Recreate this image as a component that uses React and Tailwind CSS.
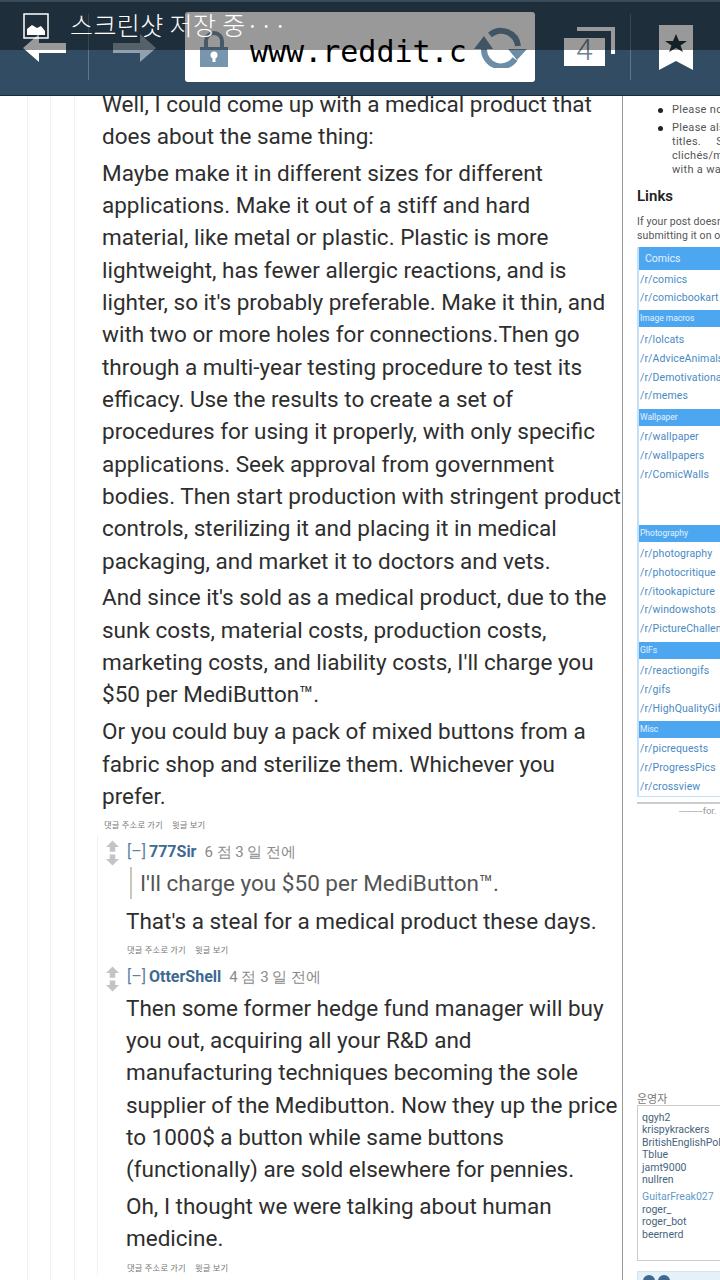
const linkGroups = [
  { title: 'Image macros', body: 'h-[82px] pt-[4.6px]', links: ['/r/lolcats', '/r/AdviceAnimals', '/r/Demotivational', '/r/memes'] },
  { title: 'Wallpaper', body: 'h-[99px] pt-[2.6px]', links: ['/r/wallpaper', '/r/wallpapers', '/r/ComicWalls'] },
  { title: 'Photography', body: 'h-[100px] pt-[3.6px]', links: ['/r/photography', '/r/photocritique', '/r/itookapicture', '/r/windowshots', '/r/PictureChallenge'] },
  { title: 'GIFs', body: 'h-[62px] pt-[3.6px]', links: ['/r/reactiongifs', '/r/gifs', '/r/HighQualityGifs'] },
  { title: 'Misc', body: 'h-[58px] pt-[2.6px]', links: ['/r/picrequests', '/r/ProgressPics', '/r/crossview'] },
]

function Votes() {
  return (
    <svg width="13" height="27" viewBox="0 0 14 28" className="mt-[1px] shrink-0">
      <path d="M7 0 L14 7 H10 V12 H4 V7 H0 Z" fill="#c4c4c4" />
      <path d="M4 15 H10 V20 H14 L7 27 L0 20 H4 Z" fill="#c4c4c4" />
    </svg>
  )
}

function CommentLinks() {
  return (
    <div className="h-[16px] pl-[1px] text-[8.3px] leading-[16px] text-[#777] whitespace-nowrap flex gap-[9px] tracking-[0.2px] font-['Noto_Sans_CJK_KR',sans-serif]">
      <span>댓글 주소로 가기</span>
      <span>윗글 보기</span>
    </div>
  )
}

function Byline({ name, meta }) {
  return (
    <div className="flex items-center h-[26px] pl-[1px] text-[16px] whitespace-nowrap">
      <span className="text-[#5f7f9c] mr-[3px]">[–]</span>
      <span className="font-bold text-[#3e6a92]">{name}</span>
      <span className="text-[#8a8a8a] text-[15px] ml-[8px]">{meta}</span>
    </div>
  )
}

function Header() {
  return (
    <div className="relative z-10 h-[96px] bg-[#324d63] border-b border-[#1c2c39] flex items-center">
      <svg width="44" height="28" viewBox="0 0 44 28" className="ml-[23px] mt-[1px]">
        <path d="M0 14 L16 0 V9 H43 V19 H16 V28 Z" fill="#fff" />
      </svg>
      <div className="ml-[21px] w-px h-[66px] mt-[-1px] bg-[#5d7789]" />
      <svg width="44" height="28" viewBox="0 0 44 28" className="ml-[24px] mt-[1px]">
        <path d="M43 14 L27 0 V9 H0 V19 H27 V28 Z" fill="#8fa1ae" />
      </svg>
      <div className="ml-[28px] w-[350px] h-[70px] bg-white rounded-[3px] flex items-center mt-[-1px]">
        <svg width="28" height="36" viewBox="0 0 28 36" className="ml-[15px] mt-[3px] shrink-0">
          <path d="M6 16 V10 a8 8 0 0 1 16 0 V16" fill="none" stroke="#7795ad" strokeWidth="4" />
          <path d="M0 16 H28 V36 H0 Z" fill="#7795ad" />
          <circle cx="14" cy="24" r="3.5" fill="#fff" />
          <path d="M12.5 25 H15.5 V31 H12.5 Z" fill="#fff" />
        </svg>
        <div className="ml-[22px] w-[216px] mt-[9px] whitespace-nowrap text-[30px] leading-none text-black font-['DejaVu_Sans_Mono',monospace]">www.reddit.c</div>
        <svg width="54" height="42" viewBox="0 0 54 42" className="ml-[8px] shrink-0">
          <path d="M16 9 A17 17 0 0 1 44 20" fill="none" stroke="#6d8ca5" strokeWidth="6" />
          <path d="M10 23 A17 17 0 0 0 41 33" fill="none" stroke="#6d8ca5" strokeWidth="6" />
          <path d="M0 23 H19 L10 10 Z" fill="#6d8ca5" />
          <path d="M34 23 H53 L43 34 Z" fill="#6d8ca5" />
        </svg>
      </div>
      <div className="relative ml-[29px] mt-[-2px] w-[52px] h-[40px]">
        <svg width="52" height="40" viewBox="0 0 52 40">
          <path d="M13 0 H51 V27 H47 V4 H13 Z" fill="#fff" />
          <path d="M0 11 H41 V39 H0 Z" fill="#fff" />
        </svg>
        <span className="absolute left-[12px] top-[8px] text-[30px] leading-[30px] font-light text-[#6e8192]">4</span>
      </div>
      <div className="ml-[14px] w-px h-[66px] mt-[-1px] bg-[#5d7789]" />
      <svg width="34" height="46" viewBox="0 0 34 46" className="ml-[28px]">
        <path d="M0 0 H34 V45 L17 36 L0 45 Z" fill="#fff" />
        <path d="M17 9 L20 16 H28 L21.5 20.5 L24 27 L17 23 L10 27 L12.5 20.5 L6 16 H14 Z" fill="#223644" />
      </svg>
    </div>
  )
}

// the screenshot toast drawn over the top of the browser bar
function StatusOverlay() {
  return (
    <div className="absolute z-20 top-0 left-0 w-full h-[50px] bg-[#000]/40 border-t-2 border-[#3a4c5a] text-white">
      <div className="flex items-center h-[48px] pl-[23px] pt-[4px]">
        <svg width="26" height="26" viewBox="0 0 26 26" className="mb-[4px]">
          <path d="M1 1 H25 V25 H1 Z" fill="none" stroke="#fff" strokeWidth="1.5" />
          <path d="M4 22 V16 L9 12 L14 15 L18 13 L22 18 V22 Z" fill="#fff" />
        </svg>
        <span className="ml-[21px] text-[25px] leading-none tracking-[0.4px] whitespace-nowrap font-['Noto_Sans_CJK_KR',sans-serif] font-light mb-[8px]">스크린샷 저장 중···</span>
      </div>
    </div>
  )
}

function Sidebar() {
  return (
    <div className="w-[97px] ml-[14px] overflow-hidden shrink-0 whitespace-nowrap text-[#444]">
      <div className="w-[140px]">
        <div className="pt-[15px] text-[11px] leading-[14px] tracking-[0.3px] text-[#555]">
          <div className="flex h-[18px]">
            <span className="w-[35px] pl-[21px] pt-[5px] shrink-0"><span className="block w-[5px] h-[5px] rounded-full bg-[#222]" /></span>
            <span>Please not</span>
          </div>
          <div className="flex">
            <span className="w-[35px] pl-[21px] pt-[5px] shrink-0"><span className="block w-[5px] h-[5px] rounded-full bg-[#222]" /></span>
            <div>
              <div>Please also</div>
              <div>titles. &nbsp; &nbsp; So</div>
              <div>clichés/memes</div>
              <div>with a warning</div>
            </div>
          </div>
        </div>
        <div className="mt-[7px] text-[15px] leading-[24px] font-semibold text-[#222]">Links</div>
        <div className="mt-[7px] text-[10.5px] leading-[14px] text-[#555] tracking-[0.1px]">
          If your post doesn't<br />submitting it on one
        </div>
        <div className="mt-[4px] border-l-2 border-b border-[#c5dff5]">
          <div className="h-[23px] bg-[#4da6f0] text-white/85 text-[10.5px] leading-[23px] pl-[6px]">Comics</div>
          <div className="h-[40px] text-[10.5px] leading-[18.8px] text-[#4a8ac4] pl-[1px] pt-[1px] tracking-[0.1px]">
            <div>/r/comics</div>
            <div>/r/comicbookart</div>
          </div>
          {linkGroups.map(g => (
            <div key={g.title}>
              <div className="h-[17px] bg-[#4da6f0] text-white/85 text-[8.5px] leading-[17px] pl-[1px]">{g.title}</div>
              <div className={`${g.body} text-[10.5px] leading-[18.8px] text-[#4a8ac4] pl-[1px] tracking-[0.1px]`}>
                {g.links.map(l => <div key={l}>{l}</div>)}
              </div>
            </div>
          ))}
        </div>
        <div className="mt-[5px] h-[2px] bg-[#ccc]" />
        <div className="text-[9.5px] leading-[13px] text-[#999] pl-[42px]">---------for.</div>
        <div className="mt-[274px] text-[11px] leading-[14px] text-[#777] font-['Noto_Sans_CJK_KR',sans-serif]">운영자</div>
        <div className="h-[156px] border border-[#ccc] bg-white pl-[4px] pt-[6px] text-[10.5px] leading-[12.6px] text-[#46647c]">
          <div>qgyh2</div>
          <div>krispykrackers</div>
          <div>BritishEnglishPolice</div>
          <div>Tblue</div>
          <div>jamt9000</div>
          <div>nullren</div>
          <div className="text-[#5f9bc9] mt-[4px]">GuitarFreak027</div>
          <div>roger_</div>
          <div>roger_bot</div>
          <div>beernerd</div>
        </div>
        <div className="mt-[10px] h-[12px] bg-[#e6f0f8] border border-[#d3e3ef] flex gap-[3px] pl-[5px] pt-[3px] overflow-hidden">
          <span className="w-[12px] h-[12px] rounded-full bg-[#3e6a92] shrink-0" />
          <span className="w-[12px] h-[12px] rounded-full bg-[#3e6a92] shrink-0" />
        </div>
      </div>
    </div>
  )
}

export default function App() {
  return (
    <div className="relative w-[720px] h-[1280px] overflow-hidden bg-white font-['Roboto',sans-serif]">
      <Header />
      <StatusOverlay />
      <div className="flex mt-[-8.5px] h-[1192.5px]">
        <div className="w-[623px] shrink-0 border-r border-[#999] pl-[27px] overflow-hidden">
          <div className="border-l border-[#f1f1f1] pl-[22px] h-full">
            <div className="border-l border-[#f1f1f1] pl-[23px] h-full">
              <div className="border-l border-[#f1f1f1] pl-[27px] h-full text-[22.5px] leading-[32.33px] text-[#2e2e2e] whitespace-nowrap">
                <p>Well, I could come up with a medical product that<br />does about the same thing:</p>
                <p className="mt-[4.5px]">
                  Maybe make it in different sizes for different<br />
                  applications. Make it out of a stiff and hard<br />
                  material, like metal or plastic. Plastic is more<br />
                  lightweight, has fewer allergic reactions, and is<br />
                  lighter, so it's probably preferable. Make it thin, and<br />
                  with two or more holes for connections.Then go<br />
                  through a multi-year testing procedure to test its<br />
                  efficacy. Use the results to create a set of<br />
                  procedures for using it properly, with only specific<br />
                  applications. Seek approval from government<br />
                  bodies. Then start production with stringent product<br />
                  controls, sterilizing it and placing it in medical<br />
                  packaging, and market it to doctors and vets.
                </p>
                <p className="mt-[4.5px]">
                  And since it's sold as a medical product, due to the<br />
                  sunk costs, material costs, production costs,<br />
                  marketing costs, and liability costs, I'll charge you<br />
                  $50 per MediButton™.
                </p>
                <p className="mt-[4.5px]">
                  Or you could buy a pack of mixed buttons from a<br />
                  fabric shop and sterilize them. Whichever you<br />
                  prefer.
                </p>
                <div className="mt-[3.5px] pl-[1px]"><CommentLinks /></div>

                <div className="mt-[4.5px] ml-[-5px] border-l border-[#f1f1f1] pl-[8px]">
                  <div className="flex gap-[7px] pt-[3px]">
                    <Votes />
                    <div className="min-w-0">
                      <Byline name="777Sir" meta="6 점 3 일 전에" />
                      <div className="mt-[2px] ml-[4px] border-l-2 border-[#c9c9b8] pl-[8px] text-[#555] h-[32px] leading-[32px]">I'll charge you $50 per MediButton™.</div>
                      <p className="mt-[6px]">That's a steal for a medical product these days.</p>
                      <div className="mt-[3px]"><CommentLinks /></div>
                    </div>
                  </div>
                  <div className="flex gap-[7px] pt-[8px]">
                    <Votes />
                    <div className="min-w-0">
                      <Byline name="OtterShell" meta="4 점 3 일 전에" />
                      <p className="mt-[1px]">
                        Then some former hedge fund manager will buy<br />
                        you out, acquiring all your R&amp;D and<br />
                        manufacturing techniques becoming the sole<br />
                        supplier of the Medibutton. Now they up the price<br />
                        to 1000$ a button while same buttons<br />
                        (functionally) are sold elsewhere for pennies.
                      </p>
                      <p className="mt-[4.5px]">Oh, I thought we were talking about human<br />medicine.</p>
                      <div className="mt-[4px]"><CommentLinks /></div>
                    </div>
                  </div>
                </div>
              </div>
            </div>
          </div>
        </div>
        <Sidebar />
      </div>
    </div>
  )
}
